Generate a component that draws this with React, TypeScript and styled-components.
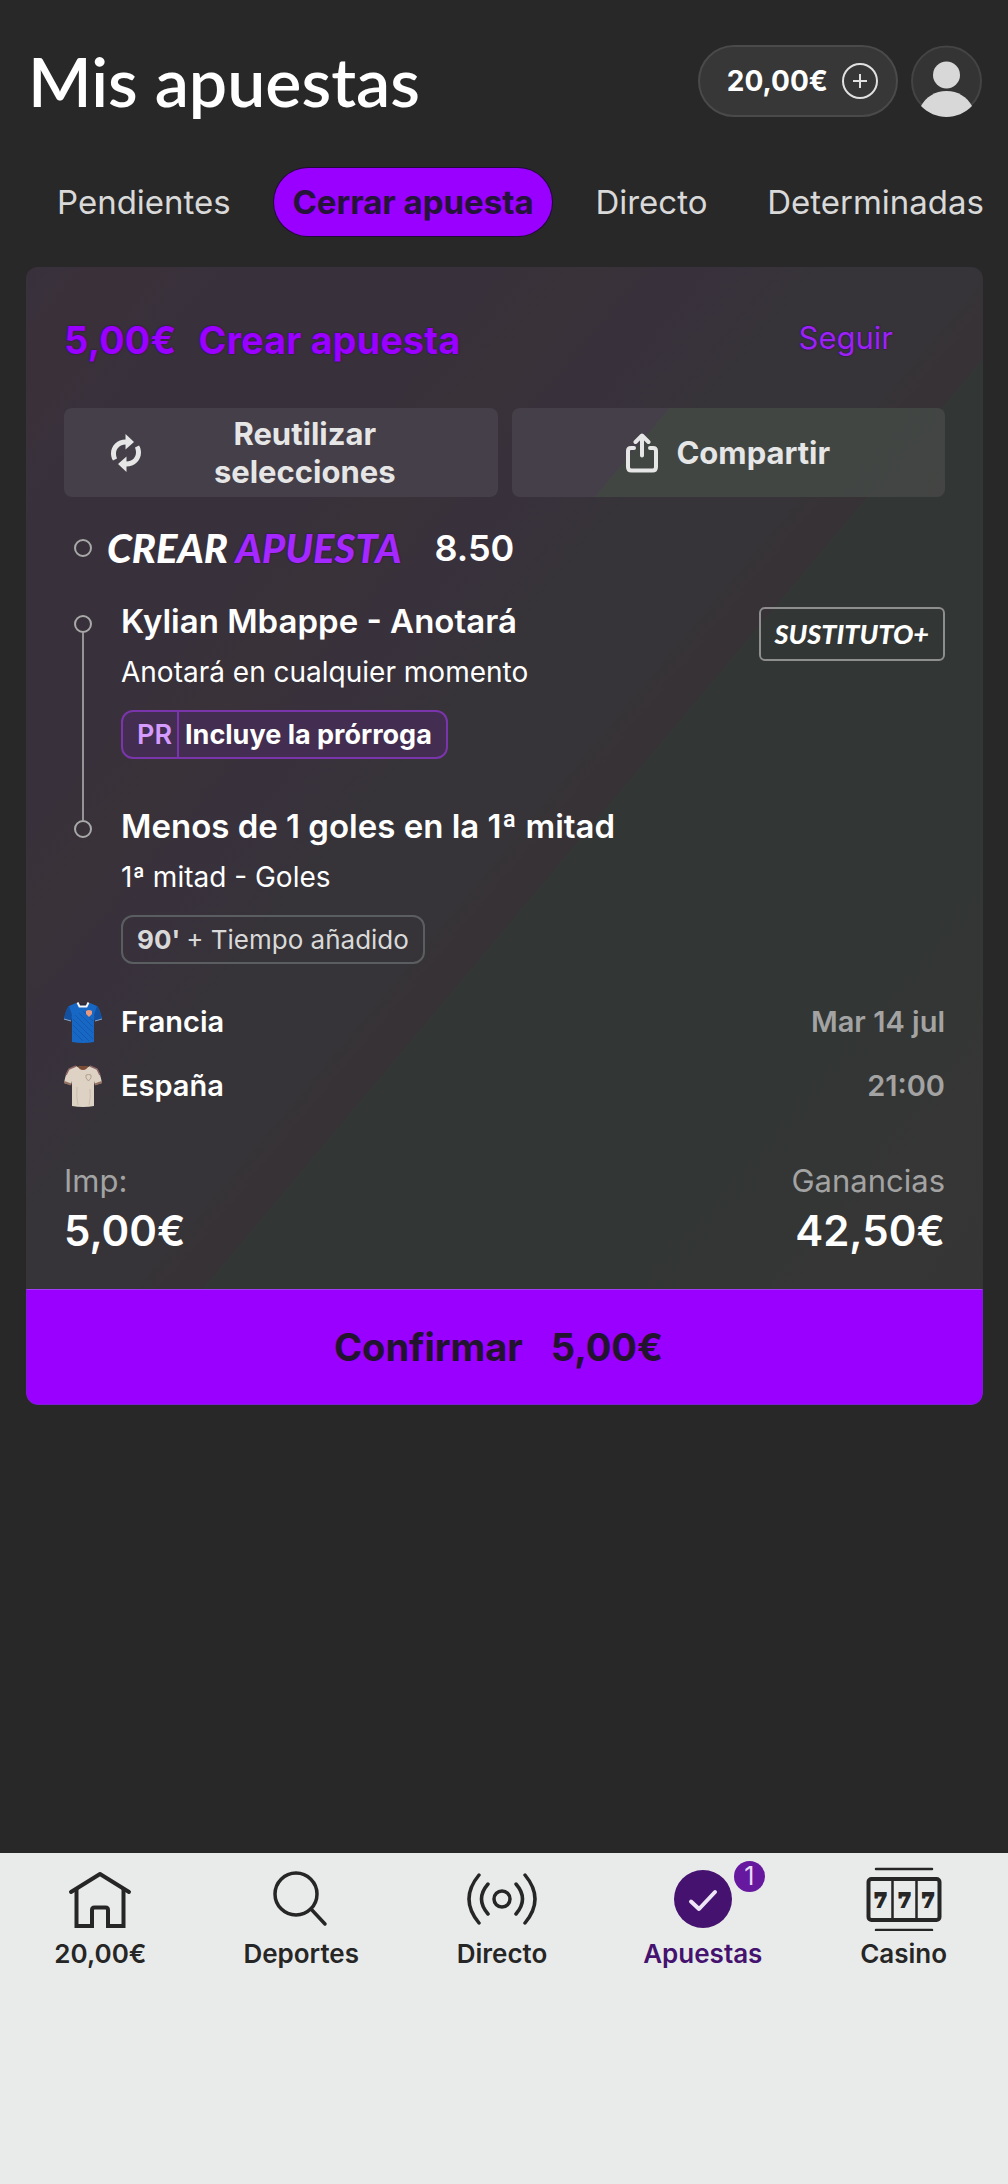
import React from "react";
import styled, { createGlobalStyle, css } from "styled-components";

const color = {
  page: "#282828",
  purple: "#9900ff",
  white: "#ffffff",
  soft: "#d9d9d9",
  muted: "#a3a3a3",
  ink: "#262626",
  nav: "#e9ebea",
  deep: "#45126f",
};

const display = `Lato, "Liberation Sans", sans-serif`;

const GlobalStyle = createGlobalStyle`
  * { box-sizing: border-box; }
  body {
    margin: 0;
    background: ${color.page};
    color: ${color.white};
    font-family: Inter, "Liberation Sans", sans-serif;
  }
  h1, h2, h3, p, ul, ol, dl, dd { margin: 0; padding: 0; }
  ul, ol { list-style: none; }
  button { font: inherit; color: inherit; border: 0; margin: 0; padding: 0; background: none; cursor: pointer; }
  a { color: inherit; text-decoration: none; }
  svg { display: block; flex: none; }
`;

const Screen = styled.div`
  min-height: 100vh;
  display: flex;
  flex-direction: column;
`;

const Header = styled.header`
  display: flex;
  align-items: center;
  justify-content: space-between;
  padding: 45px 26px 0 28px;
`;

const Title = styled.h1`
  font-family: ${display};
  font-size: 68px;
  line-height: 72px;
  font-weight: 600;
`;

const Account = styled.div`
  display: flex;
  align-items: center;
  gap: 13px;
`;

const BalanceButton = styled.button`
  display: flex;
  align-items: center;
  gap: 14px;
  height: 72px;
  padding: 0 18px 0 27px;
  border: 2px solid #4a4a4a;
  border-radius: 36px;
  background: #373737;
  font-size: 28px;
  line-height: 36px;
  font-weight: 700;
`;

const AvatarButton = styled.button`
  width: 71px;
  height: 72px;
`;

const Tabs = styled.nav`
  display: flex;
  justify-content: space-between;
  margin-top: 51px;
  padding: 0 8px 0 41px;
`;

const Tab = styled.button<{ $active?: boolean }>`
  height: 68px;
  padding: 0 16px;
  border-radius: 34px;
  font-size: 33px;
  line-height: 40px;
  color: ${color.soft};
  white-space: nowrap;
  ${(p) =>
    p.$active &&
    css`
      padding: 0 18px;
      background: ${color.purple};
      color: #25133a;
      font-weight: 700;
      box-shadow: 0 0 0 1px #22083c;
    `}
`;

const Main = styled.main`
  flex: 1;
  padding: 31px 25px 40px 26px;
`;

const Card = styled.article`
  border-radius: 12px;
  overflow: hidden;
`;

const CardBody = styled.div`
  padding: 49px 38px 31px;
  background: linear-gradient(
    130deg,
    #38313b 0%,
    #3a303a 5%,
    #38313b 12%,
    #38313b 26%,
    #393238 31%,
    #38313c 36%,
    #38323b 41%,
    #363438 44%,
    #363438 53%,
    #373236 55%,
    #373236 57%,
    #323634 57%,
    #323634 80%,
    #353635 90%,
    #363536 100%
  );
`;

const CardHead = styled.header`
  display: flex;
  align-items: flex-start;
  justify-content: space-between;
`;

const CardTitle = styled.h2`
  display: flex;
  gap: 22px;
  font-size: 38px;
  line-height: 48px;
  font-weight: 700;
  color: ${color.purple};
  text-shadow: 0 0 2px #2c0052;
`;

const FollowButton = styled.button`
  margin-right: 52px;
  font-size: 31px;
  line-height: 44px;
  color: #9b22f5;
  text-shadow: 0 0 2px #2c0052;
`;

const Actions = styled.div`
  display: grid;
  grid-template-columns: 1fr 1fr;
  gap: 14px;
  margin-top: 44px;
`;

const ActionButton = styled.button<{ $tinted?: boolean }>`
  display: flex;
  align-items: center;
  justify-content: center;
  gap: 18px;
  height: 89px;
  border-radius: 8px;
  background: ${(p) =>
    p.$tinted
      ? "linear-gradient(130deg, #453f49 0%, #453f49 31%, #414643 31%, #414643 76%, #434443 100%)"
      : "#443f48"};
  font-size: 31px;
  line-height: 38px;
  font-weight: 700;
  color: #e6e6e6;
`;

const WrappedLabel = styled.span`
  width: 292px;
  padding: 0 50px;
`;

const Builder = styled.div`
  display: flex;
  align-items: center;
  margin-top: 27px;
  line-height: 48px;
`;

const BuilderLogo = styled.h3`
  margin: 0 33px 0 5px;
  font-family: ${display};
  font-size: 40px;
  font-weight: 900;
  font-style: italic;
`;

const LogoAccent = styled.span`
  color: #a428ff;
  text-shadow: 0 0 2px #2c0052;
`;

const Odds = styled.span`
  font-size: 36px;
  font-weight: 600;
`;

const Rail = styled.div`
  display: flex;
  flex-direction: column;
  align-items: center;
  flex: none;
  width: 38px;
`;

const Dot = styled.span`
  flex: none;
  width: 18px;
  height: 18px;
  border: 2px solid #a9a9a9;
  border-radius: 50%;
`;

const LeadSegment = styled.span<{ $on?: boolean }>`
  flex: none;
  width: 2px;
  height: 16px;
  background: ${(p) => (p.$on ? "#949494" : "transparent")};
`;

const TailSegment = styled.span`
  flex: 1;
  width: 2px;
  background: #949494;
`;

const Legs = styled.ol`
  margin-top: 27px;
`;

const Leg = styled.li`
  display: flex;
  gap: 19px;
`;

const LegBody = styled.div<{ $last?: boolean }>`
  flex: 1;
  display: flex;
  justify-content: space-between;
  align-items: flex-start;
  padding-bottom: ${(p) => (p.$last ? 0 : 45)}px;
`;

const LegTitle = styled.h3`
  font-size: 33px;
  line-height: 44px;
  font-weight: 600;
`;

const LegMarket = styled.p`
  margin-top: 11px;
  font-size: 28px;
  line-height: 36px;
`;

const Pill = styled.p<{ $extra?: boolean }>`
  display: flex;
  width: fit-content;
  height: 49px;
  margin-top: 20px;
  padding: 0 14px;
  border: 2px solid ${(p) => (p.$extra ? "#7a35ac" : "#5b5e61")};
  border-radius: 12px;
  background: ${(p) => (p.$extra ? "#432d50" : "transparent")};
  font-size: ${(p) => (p.$extra ? 27 : 26)}px;
  line-height: 45px;
  font-weight: ${(p) => (p.$extra ? 700 : 400)};
  color: ${(p) => (p.$extra ? color.white : color.soft)};
`;

const PillTag = styled.span`
  margin-right: 6px;
  padding-right: 5px;
  border-right: 2px solid #7a35ac;
  color: #d59bff;
  font-weight: 600;
`;

const PillMinutes = styled.strong`
  margin-right: 6px;
  font-weight: 700;
`;

const SubBadge = styled.span`
  margin-top: 8px;
  padding: 0 14px;
  border: 2px solid #8e8e8e;
  border-radius: 6px;
  font-family: ${display};
  font-size: 27px;
  line-height: 50px;
  font-weight: 900;
  font-style: italic;
`;

const Fixture = styled.div`
  margin-top: 26px;
`;

const FixtureRow = styled.div`
  display: flex;
  align-items: center;
  gap: 19px;
  height: 64px;
  font-size: 29px;
  line-height: 36px;
  font-weight: 600;
`;

const When = styled.time`
  margin-left: auto;
  font-weight: 600;
  color: ${color.muted};
`;

const Totals = styled.dl`
  display: flex;
  justify-content: space-between;
  margin-top: 43px;
`;

const Total = styled.div<{ $right?: boolean }>`
  text-align: ${(p) => (p.$right ? "right" : "left")};
`;

const TotalLabel = styled.dt`
  font-size: 31px;
  line-height: 40px;
  color: ${color.muted};
`;

const TotalValue = styled.dd`
  margin-top: 3px;
  font-size: 42px;
  line-height: 54px;
  font-weight: 600;
`;

const ConfirmButton = styled.button`
  display: flex;
  align-items: center;
  justify-content: center;
  gap: 28px;
  width: 100%;
  height: 116px;
  padding-right: 12px;
  border: 1px solid #7c1fd0;
  border-top-color: #a23df5;
  border-radius: 0 0 12px 12px;
  background: ${color.purple};
  color: #22132f;
  font-size: 38px;
  line-height: 48px;
  font-weight: 700;
`;

const BottomNav = styled.nav`
  display: grid;
  grid-template-columns: repeat(5, 1fr);
  padding: 14px 4px 213px 0;
  background: ${color.nav};
  color: ${color.ink};
`;

const NavItem = styled.a<{ $active?: boolean }>`
  display: flex;
  flex-direction: column;
  align-items: center;
  gap: 6px;
  font-size: 26px;
  line-height: 34px;
  font-weight: 600;
  color: ${(p) => (p.$active ? color.deep : color.ink)};
`;

const NavIcon = styled.span`
  position: relative;
  display: grid;
  place-items: center;
  height: 64px;
`;

const Count = styled.span`
  position: absolute;
  top: -6px;
  left: 60px;
  width: 31px;
  height: 31px;
  border-radius: 50%;
  background: #66199e;
  color: #eadcf5;
  font-size: 25px;
  line-height: 31px;
  font-weight: 400;
  text-align: center;
`;

const PlusIcon = () => (
  <svg width="36" height="36" viewBox="0 0 36 36" fill="none" stroke="#e0e0e0" strokeWidth="2" aria-hidden="true">
    <circle cx="18" cy="18" r="17" />
    <path d="M18 11v14M11 18h14" />
  </svg>
);

const AvatarIcon = () => (
  <svg width="71" height="72" viewBox="0 0 71 72" aria-hidden="true">
    <circle cx="35.5" cy="36" r="34.5" fill="#343434" stroke="#444444" strokeWidth="2" />
    <circle cx="35.5" cy="30" r="13.5" fill="#d8d8d8" />
    <path d="M10 61C15 52 24 46 35.500 46S56 52 61 61C54 68 45 72 35.500 72S17 68 10 61Z" fill="#d8d8d8" />
  </svg>
);

const ReuseIcon = () => (
  <svg width="30" height="38" viewBox="0 0 30 38" fill="#e6e6e6" aria-hidden="true">
    <path d="M14.500 0L23 8L14.500 15.500V10.500C9 10.500 5 14.500 5 19.500C5 21.500 5.500 23 6 24.500L2 26.500C.700 24.500 0 22 0 19.500C0 11.500 6.500 5.500 14.500 5.500Z" />
    <path d="M15.500 38L7 30L15.500 22.500V27.500C21 27.500 25 23.500 25 18.500C25 16.500 24.500 15 24 13.500L28 11.500C29.300 13.500 30 16 30 18.500C30 26.500 23.500 32.500 15.500 32.500Z" />
  </svg>
);

const ShareIcon = () => (
  <svg
    width="32"
    height="40"
    viewBox="0 0 32 40"
    fill="none"
    stroke="#e6e6e6"
    strokeWidth="4"
    strokeLinecap="round"
    strokeLinejoin="round"
    aria-hidden="true"
  >
    <path d="M8 15H5Q2 15 2 18V34Q2 37.500 5.500 37.500H26.500Q30 37.500 30 34V18Q30 15 27 15H24" />
    <path d="M16 22.500V3M9.500 9L16 2.500L22.500 9" />
  </svg>
);

const FranceShirt = () => (
  <svg width="38" height="42" viewBox="0 0 38 42" aria-hidden="true">
    <path d="M12 2L5 5Q2 8 0 18L7 20L8 16V41Q19 43 30 41V16L31 20L38 18Q36 8 33 5L26 2Q19 6 12 2Z" fill="#1767c4" />
    <path d="M5 5Q2 8 0 18L7 20L8 14ZM33 5Q36 8 38 18L31 20L30 14Z" fill="#1450a0" />
    <path d="M9 18L29 38M9 24L25 40M9 30L19 40M11 14L29 32M15 12L29 26M19 10L29 20" stroke="#1358ac" strokeWidth="1" />
    <path d="M0 18L7 20M38 18L31 20" stroke="#8aa6c4" strokeWidth="1" />
    <path d="M14 2Q19 4 24 2L22 5H16Z" fill="#282b3a" />
    <path d="M13.500 1.500L15.500 5.500H22.500L24.500 1.500" fill="none" stroke="#f4f6f8" strokeWidth="2" />
    <path d="M22 10Q25 8 28 10V13L25 16L22 13Z" fill="#e79a80" />
  </svg>
);

const SpainShirt = () => (
  <svg width="38" height="42" viewBox="0 0 38 42" aria-hidden="true">
    <path d="M12 1L5 4Q2 7 0 18L7 20L8 16V41Q19 43 30 41V16L31 20L38 18Q36 7 33 4L26 1Q19 6 12 1Z" fill="#ddd2c3" />
    <path d="M12 1L5 4L2 10M26 1L33 4L36 10" fill="none" stroke="#8b6464" strokeWidth="1.500" />
    <path d="M0 17L7 19.500M38 17L31 19.500" stroke="#94705f" strokeWidth="2" />
    <path d="M14 1H24Q23 5 19 5T14 1Z" fill="#7b4b34" />
    <path d="M22 10Q25 9 27 10V13L24.500 16L22 13Z" fill="none" stroke="#b3a08f" strokeWidth="1" />
    <path d="M13 22Q12 32 14 40M26 24Q27 32 25 40" fill="none" stroke="#cabfae" strokeWidth="1" />
  </svg>
);

const HomeIcon = () => (
  <svg width="64" height="64" viewBox="0 0 64 64" fill="none" stroke={color.ink} strokeWidth="4" strokeLinecap="round" aria-hidden="true">
    <path d="M3 25L32 7L61 25" strokeLinejoin="round" />
    <path d="M8.500 22V59H24V43Q24 40.500 26.500 40.500H37.500Q40 40.500 40 43V59H55.500V22" />
  </svg>
);

const SearchIcon = () => (
  <svg width="64" height="64" viewBox="0 0 64 64" fill="none" stroke={color.ink} strokeWidth="3.500" strokeLinecap="round" aria-hidden="true">
    <circle cx="27" cy="27" r="21" />
    <path d="M42 42L56 57" />
  </svg>
);

const LiveIcon = () => (
  <svg width="72" height="64" viewBox="0 0 72 64" fill="none" stroke={color.ink} strokeWidth="3.500" strokeLinecap="round" aria-hidden="true">
    <circle cx="36" cy="32" r="8" />
    <path d="M22 17Q9 32 22 47M50 17Q63 32 50 47" />
    <path d="M13 8Q-7 32 13 56M59 8Q79 32 59 56" />
  </svg>
);

const BetsIcon = () => (
  <svg width="58" height="58" viewBox="0 0 58 58" fill="none" aria-hidden="true">
    <circle cx="29" cy="29" r="29" fill={color.deep} />
    <path d="M17 31.500L25 39L41 22" stroke="#eee6f6" strokeWidth="4" strokeLinecap="round" strokeLinejoin="round" />
  </svg>
);

const SlotsIcon = () => (
  <svg width="76" height="64" viewBox="0 0 76 64" fill="none" stroke={color.ink} strokeWidth="2.500" strokeLinecap="round" aria-hidden="true">
    <path d="M10 2H66M10 63H66" />
    <rect x="2.500" y="12" width="71" height="41" rx="3" strokeWidth="4" />
    <path d="M26.500 13V52M50.500 13V52" />
    <g
      fill={color.ink}
      strokeWidth="2"
      fontFamily="'DejaVu Serif', serif"
      fontWeight="700"
      fontSize="19"
      textAnchor="middle"
      stroke={color.ink}
    >
      <text x="14.500" y="40">7</text>
      <text x="38.500" y="40">7</text>
      <text x="62" y="40">7</text>
    </g>
  </svg>
);

const tabs = ["Pendientes", "Cerrar apuesta", "Directo", "Determinadas"];

const navItems = [
  { label: "20,00€", icon: <HomeIcon /> },
  { label: "Deportes", icon: <SearchIcon /> },
  { label: "Directo", icon: <LiveIcon /> },
  { label: "Apuestas", icon: <BetsIcon />, count: 1 },
  { label: "Casino", icon: <SlotsIcon /> },
];

export default function App() {
  const [tab, setTab] = React.useState("Cerrar apuesta");

  return (
    <>
      <GlobalStyle />
      <Screen>
        <Header>
          <Title>Mis apuestas</Title>
          <Account>
            <BalanceButton>
              20,00€
              <PlusIcon />
            </BalanceButton>
            <AvatarButton aria-label="Cuenta">
              <AvatarIcon />
            </AvatarButton>
          </Account>
        </Header>

        <Tabs>
          {tabs.map((name) => (
            <Tab key={name} $active={name === tab} onClick={() => setTab(name)}>
              {name}
            </Tab>
          ))}
        </Tabs>

        <Main>
          <Card>
            <CardBody>
              <CardHead>
                <CardTitle>
                  <span>5,00€</span>
                  <span>Crear apuesta</span>
                </CardTitle>
                <FollowButton>Seguir</FollowButton>
              </CardHead>

              <Actions>
                <ActionButton>
                  <ReuseIcon />
                  <WrappedLabel>Reutilizar selecciones</WrappedLabel>
                </ActionButton>
                <ActionButton $tinted>
                  <ShareIcon />
                  Compartir
                </ActionButton>
              </Actions>

              <Builder>
                <Rail>
                  <Dot />
                </Rail>
                <BuilderLogo>
                  CREAR <LogoAccent>APUESTA</LogoAccent>
                </BuilderLogo>
                <Odds>8.50</Odds>
              </Builder>

              <Legs>
                <Leg>
                  <Rail>
                    <LeadSegment />
                    <Dot />
                    <TailSegment />
                  </Rail>
                  <LegBody>
                    <div>
                      <LegTitle>Kylian Mbappe - Anotará</LegTitle>
                      <LegMarket>Anotará en cualquier momento</LegMarket>
                      <Pill $extra>
                        <PillTag>PR</PillTag>
                        Incluye la prórroga
                      </Pill>
                    </div>
                    <SubBadge>SUSTITUTO+</SubBadge>
                  </LegBody>
                </Leg>
                <Leg>
                  <Rail>
                    <LeadSegment $on />
                    <Dot />
                  </Rail>
                  <LegBody $last>
                    <div>
                      <LegTitle>Menos de 1 goles en la 1ª mitad</LegTitle>
                      <LegMarket>1ª mitad - Goles</LegMarket>
                      <Pill>
                        <PillMinutes>90'</PillMinutes>+ Tiempo añadido
                      </Pill>
                    </div>
                  </LegBody>
                </Leg>
              </Legs>

              <Fixture>
                <FixtureRow>
                  <FranceShirt />
                  Francia
                  <When>Mar 14 jul</When>
                </FixtureRow>
                <FixtureRow>
                  <SpainShirt />
                  España
                  <When>21:00</When>
                </FixtureRow>
              </Fixture>

              <Totals>
                <Total>
                  <TotalLabel>Imp:</TotalLabel>
                  <TotalValue>5,00€</TotalValue>
                </Total>
                <Total $right>
                  <TotalLabel>Ganancias</TotalLabel>
                  <TotalValue>42,50€</TotalValue>
                </Total>
              </Totals>
            </CardBody>
            <ConfirmButton>
              <span>Confirmar</span>
              <span>5,00€</span>
            </ConfirmButton>
          </Card>
        </Main>

        <BottomNav>
          {navItems.map((item) => (
            <NavItem key={item.label} href="#" $active={item.count !== undefined}>
              <NavIcon>
                {item.icon}
                {item.count !== undefined && <Count>{item.count}</Count>}
              </NavIcon>
              {item.label}
            </NavItem>
          ))}
        </BottomNav>
      </Screen>
    </>
  );
}
